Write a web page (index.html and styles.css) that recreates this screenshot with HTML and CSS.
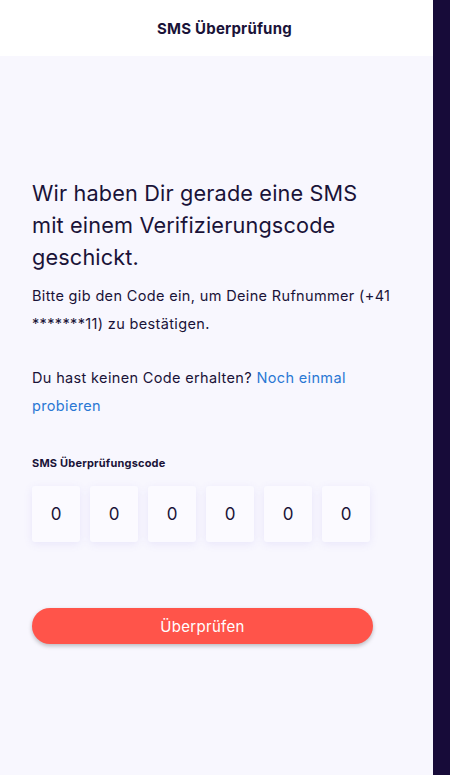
FILE: index.html
```html
<!DOCTYPE html>
<html lang="de">
<head>
<meta charset="utf-8">
<link rel="stylesheet" href="styles.css">
</head>
<body>
<div class="app">
  <div class="main">
    <header class="topbar"><h1 class="title">SMS Überprüfung</h1></header>
    <section class="content">
      <h2 class="heading">Wir haben Dir gerade eine SMS mit einem Verifizierungscode geschickt.</h2>
      <p class="text">Bitte gib den Code ein, um Deine Rufnummer (+41 *******11) zu bestätigen.</p>
      <p class="text resend">Du hast keinen Code erhalten? <a class="link" href="#">Noch einmal probieren</a></p>
      <div class="label">SMS Überprüfungscode</div>
      <div class="codes">
        <div class="code">0</div>
        <div class="code">0</div>
        <div class="code">0</div>
        <div class="code">0</div>
        <div class="code">0</div>
        <div class="code">0</div>
      </div>
      <button class="btn">Überprüfen</button>
    </section>
  </div>
  <div class="sidebar"></div>
</div>
</body>
</html>
```
FILE: styles.css
```css
* { box-sizing: border-box; }
html, body { margin: 0; padding: 0; }
body {
  font-family: "Inter", "Noto Sans", sans-serif;
  color: #1a1338;
  background: #f8f7fe;
}
.app {
  display: flex;
  width: 450px;
  height: 775px;
}
.main {
  width: 433px;
  background: #f8f7fe;
  display: flex;
  flex-direction: column;
}
.sidebar {
  width: 17px;
  background: #170b39;
}
.topbar {
  height: 56px;
  background: #ffffff;
  display: flex;
  align-items: center;
  justify-content: center;
  padding-left: 16px;
}
.title {
  margin: 0;
  font-size: 15px;
  font-weight: 700;
  letter-spacing: 0.2px;
}
.content {
  padding: 121px 32px 0 32px;
}
.heading {
  margin: 0;
  max-width: 345px;
  font-size: 21.7px;
  font-weight: 400;
  line-height: 32px;
  letter-spacing: 0.15px;
}
.text {
  margin: 9px 0 0 0;
  font-size: 14.5px;
  line-height: 28px;
  letter-spacing: 0.35px;
}
.resend {
  margin-top: 26px;
}
.link {
  color: #2a78d4;
  text-decoration: none;
}
.label {
  margin-top: 35px;
  font-size: 11px;
  font-weight: 700;
  line-height: 16px;
  letter-spacing: 0.2px;
}
.codes {
  display: flex;
  gap: 10px;
  margin-top: 15px;
}
.code {
  width: 48px;
  height: 56px;
  background: #fbfaff;
  border-radius: 3px;
  box-shadow: 0 2px 8px rgba(120, 110, 220, 0.12);
  display: flex;
  align-items: center;
  justify-content: center;
  font-size: 17px;
}
.btn {
  display: block;
  margin-top: 66px;
  width: 341px;
  height: 36px;
  border: none;
  border-radius: 18px;
  background: #ff544a;
  color: #ffffff;
  font-family: inherit;
  font-size: 15px;
  letter-spacing: 0.3px;
  box-shadow: 0 2px 4px rgba(0, 0, 0, 0.25);
}
```
